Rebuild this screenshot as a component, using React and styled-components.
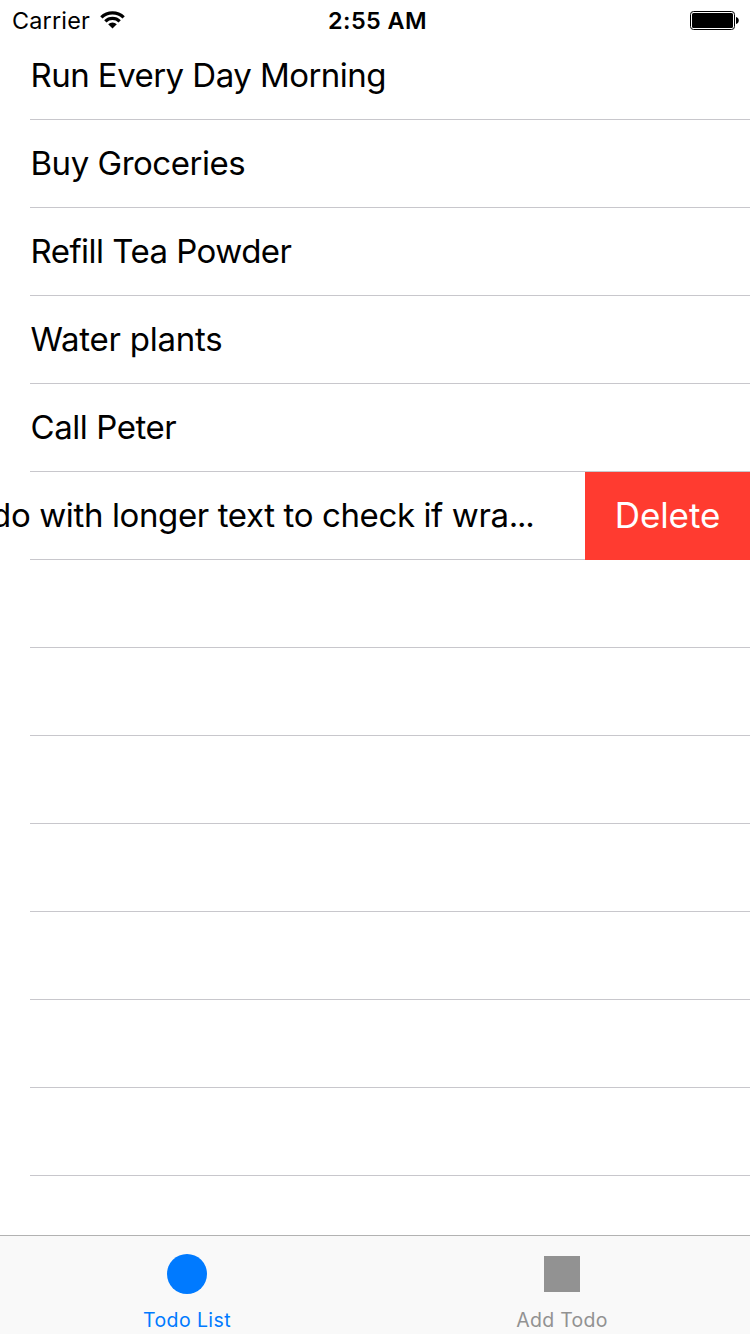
import React from "react";
import styled, { createGlobalStyle } from "styled-components";

const GlobalStyle = createGlobalStyle`
  *, *::before, *::after { box-sizing: border-box; }
  body { margin: 0; background: #fff; color: #000; font-family: Inter, "Liberation Sans", sans-serif; }
`;

const Screen = styled.div`
  width: 750px;
  height: 1334px;
  display: flex;
  flex-direction: column;
  overflow: hidden;
  background: #fff;
`;

const StatusBar = styled.header`
  flex: none;
  height: 40px;
  padding: 0 11px 0 12px;
  display: grid;
  grid-template-columns: 1fr auto 1fr;
  align-items: center;
`;

const Carrier = styled.div`
  display: flex;
  align-items: center;
`;

const WifiIcon = styled.svg`
  margin-left: 10px;
`;

const Label = styled.span`
  display: inline-block;
  white-space: nowrap;
  font-size: ${(p) => p.$size}px;
  font-weight: ${(p) => p.$weight || 400};
  letter-spacing: ${(p) => p.$spacing || 0}px;
`;

const Clock = styled(Label)`
  padding-left: 4px;
`;

const Ellipsis = styled.span`
  letter-spacing: -1.2px;
`;

const BatteryIcon = styled.svg`
  justify-self: end;
`;

const List = styled.main`
  flex: 1;
  min-height: 0;
  overflow: hidden;
  margin-top: -8px;
`;

const Row = styled.div`
  height: 88px;
  display: flex;
  padding-left: ${(p) => (p.$swiped ? 0 : 30.5)}px;
  background: linear-gradient(#c8c7cc, #c8c7cc) 30px 87px / 720px 1px no-repeat;
`;

const RowText = styled.div`
  flex: 1;
  min-width: 0;
  display: flex;
  align-items: center;
  justify-content: ${(p) => (p.$swiped ? "flex-end" : "flex-start")};
  padding-right: ${(p) => (p.$swiped ? 51.4 : 0)}px;
  padding-bottom: 3px;
  overflow: hidden;
`;

const DeleteButton = styled.button`
  flex: none;
  width: 165px;
  height: 88px;
  padding: 0 0 3px;
  border: 0;
  background: #ff3b30;
  color: #fff;
  font-family: inherit;
`;

const TabBar = styled.nav`
  flex: none;
  height: 99px;
  display: grid;
  grid-template-columns: 1fr 1fr;
  background: #f9f9f9;
  border-top: 1px solid #b2b2b2;
`;

const Tab = styled.div`
  display: flex;
  flex-direction: column;
  align-items: center;
  padding: 18px 2px 0 0;
  color: ${(p) => (p.$active ? "#007aff" : "#929292")};
`;

const TabLabel = styled(Label)`
  padding-left: 1px;
`;

const TabIcon = styled.svg`
  display: block;
  margin-bottom: 14px;
`;

const todos = [
  { text: "Run Every Day Morning", spacing: -0.54 },
  { text: "Buy Groceries", spacing: -0.48 },
  { text: "Refill Tea Powder", spacing: -0.53 },
  { text: "Water plants", spacing: -0.25 },
  { text: "Call Peter", spacing: -0.44 },
  { text: "Todo with longer text to check if wra", spacing: -0.38, swiped: true },
];

const emptyRows = Array.from({ length: 8 }, (_, i) => i);

export default function App() {
  return (
    <>
      <GlobalStyle />
      <Screen>
        <StatusBar>
          <Carrier>
            <Label $size={23.4} $spacing={0.2}>Carrier</Label>
            <WifiIcon width="25" height="18" viewBox="0 0 25 18">
              <path d="M0.2 5.200A17.500 17.500 0 0 1 24.800 5.200L22.500 7.500A14.200 14.200 0 0 0 2.500 7.500Z" />
              <path d="M4.200 9.300A11.700 11.700 0 0 1 20.800 9.300L18.500 11.600A8.500 8.500 0 0 0 6.500 11.600Z" />
              <path d="M8.200 13.300A6 6 0 0 1 16.800 13.300L12.500 17.600Z" />
            </WifiIcon>
          </Carrier>
          <Clock $size={23.4} $weight={600} $spacing={0.45}>2:55 AM</Clock>
          <BatteryIcon width="49" height="19" viewBox="0 0 49 19">
            <rect x="0.5" y="0.5" width="44" height="18" rx="3" fill="none" stroke="#000" />
            <rect x="2" y="2" width="41" height="15" rx="1.5" />
            <path d="M46 6C49.700 6.500 49.700 12.500 46 13Z" />
          </BatteryIcon>
        </StatusBar>
        <List>
          {todos.map((t) => (
            <Row key={t.text} $swiped={t.swiped}>
              <RowText $swiped={t.swiped}>
                <Label $size={33} $spacing={t.spacing}>
                  {t.text}
                  {t.swiped && <Ellipsis>...</Ellipsis>}
                </Label>
              </RowText>
              {t.swiped && (
                <DeleteButton>
                  <Label $size={35} $spacing={-0.1}>Delete</Label>
                </DeleteButton>
              )}
            </Row>
          ))}
          {emptyRows.map((i) => <Row key={i} />)}
        </List>
        <TabBar>
          <Tab $active>
            <TabIcon width="40" height="40" viewBox="0 0 40 40" fill="currentColor"><circle cx="20" cy="20" r="20" /></TabIcon>
            <TabLabel $size={19.5} $spacing={0.4}>Todo List</TabLabel>
          </Tab>
          <Tab>
            <TabIcon width="40" height="40" viewBox="0 0 40 40" fill="currentColor"><rect x="2" y="2" width="36" height="36" /></TabIcon>
            <TabLabel $size={19.5} $spacing={0.3}>Add Todo</TabLabel>
          </Tab>
        </TabBar>
      </Screen>
    </>
  );
}
